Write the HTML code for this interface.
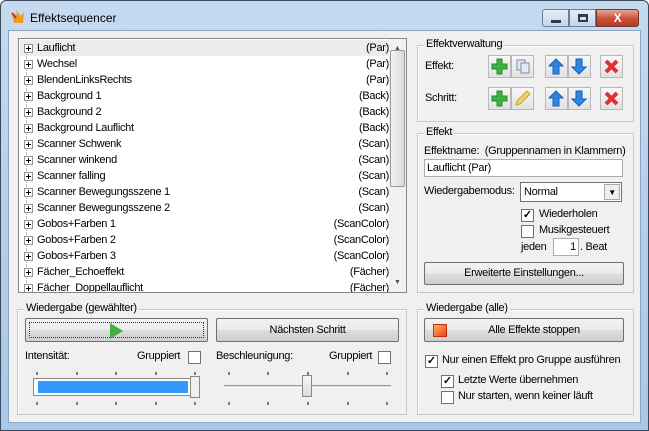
<!DOCTYPE html>
<html><head><meta charset="utf-8"><style>
*{box-sizing:border-box;margin:0;padding:0}
body{width:649px;height:431px;overflow:hidden;background:#fff;font-family:"Liberation Sans",sans-serif;font-size:11px;letter-spacing:-0.3px;color:#000;position:relative}
.a{position:absolute}
.frame{left:0;top:0;width:649px;height:431px;background:linear-gradient(#c5daf0,#b3cde8 60%,#a9c8ea);border:1px solid #3a4a5c;border-radius:6px 6px 0 0}
.client{left:8px;top:30px;width:633px;height:393px;background:#f0f0f0;border:1px solid #8ea5bf}
.grp{position:absolute;border:1px solid #c8c8c8;box-shadow:inset 1px 1px 0 #fff}
.grp>.t{position:absolute;top:-8px;left:6px;background:#f0f0f0;padding:0 2px}
.btn{position:absolute;border:1px solid #707070;border-radius:2px;background:linear-gradient(#f2f2f2,#ebebeb 50%,#dddddd 51%,#cfcfcf);text-align:center}
.ib{position:absolute;width:23px;height:23px;border:1px solid #b8b8b8;background:linear-gradient(#f7f7f7,#e2e2e2)}
.cb{position:absolute;width:13px;height:13px;border:1px solid #707070;background:#fff;font-size:11px;line-height:11px;text-align:center;font-weight:bold;letter-spacing:0}
.row{position:absolute;left:2px;width:368px;height:16px;line-height:16px}
.row .p{position:absolute;left:3px;top:4px;width:9px;height:9px;border:1px solid #909090;background:#fff}
.row .p:before{content:"";position:absolute;left:1px;top:3px;width:5px;height:1px;background:#000}
.row .p:after{content:"";position:absolute;left:3px;top:1px;width:1px;height:5px;background:#000}
.row .n{position:absolute;left:16px}
.row .g{position:absolute;right:0}
</style></head><body>
<div class="a frame"></div>
<svg class="a" style="left:10px;top:9px" width="16" height="16"><path d="M2 4 L7 6 L6 1 L11 7 L14 3 L13 14 L4 14 Z" fill="#f39a1a"/><path d="M2 4 L6 9" stroke="#d03020" stroke-width="2"/></svg>
<div class="a" style="left:30px;top:11px;font-size:12px;letter-spacing:0">Effektsequencer</div>
<div class="a" style="left:542px;top:9px;width:27px;height:18px;border:1px solid #6d7e94;border-radius:3px 0 0 3px;background:linear-gradient(#e6eef8,#c4d4e8)"><div class="a" style="left:8px;top:10px;width:10px;height:3px;background:#2d3b4f"></div></div>
<div class="a" style="left:569px;top:9px;width:27px;height:18px;border:1px solid #6d7e94;background:linear-gradient(#e6eef8,#c4d4e8)"><div class="a" style="left:8px;top:4px;width:10px;height:8px;border:2px solid #2d3b4f;border-top-width:3px"></div></div>
<div class="a" style="left:596px;top:9px;width:43px;height:18px;border:1px solid #6d3b33;border-radius:0 3px 3px 0;background:linear-gradient(#e8a593,#c7503a 55%,#b83a22);color:#fff;font-weight:bold;text-align:center;line-height:16px;font-size:12px">X</div>
<div class="a client"></div>

<div class="a" style="left:18px;top:38px;width:389px;height:255px;border:1px solid #828790;background:#fff;overflow:hidden">
<div class="a" style="left:1px;top:1px;width:369px;height:16px;background:#ececec"></div>
<div class="a" style="left:7px;top:8px;width:1px;height:250px;border-left:1px dotted #a0a0a0"></div>
<div class="row" style="top:1px"><span class="p"></span><span class="n">Lauflicht</span><span class="g">(Par)</span></div>
<div class="row" style="top:17px"><span class="p"></span><span class="n">Wechsel</span><span class="g">(Par)</span></div>
<div class="row" style="top:33px"><span class="p"></span><span class="n">BlendenLinksRechts</span><span class="g">(Par)</span></div>
<div class="row" style="top:49px"><span class="p"></span><span class="n">Background 1</span><span class="g">(Back)</span></div>
<div class="row" style="top:65px"><span class="p"></span><span class="n">Background 2</span><span class="g">(Back)</span></div>
<div class="row" style="top:81px"><span class="p"></span><span class="n">Background Lauflicht</span><span class="g">(Back)</span></div>
<div class="row" style="top:97px"><span class="p"></span><span class="n">Scanner Schwenk</span><span class="g">(Scan)</span></div>
<div class="row" style="top:113px"><span class="p"></span><span class="n">Scanner winkend</span><span class="g">(Scan)</span></div>
<div class="row" style="top:129px"><span class="p"></span><span class="n">Scanner falling</span><span class="g">(Scan)</span></div>
<div class="row" style="top:145px"><span class="p"></span><span class="n">Scanner Bewegungsszene 1</span><span class="g">(Scan)</span></div>
<div class="row" style="top:161px"><span class="p"></span><span class="n">Scanner Bewegungsszene 2</span><span class="g">(Scan)</span></div>
<div class="row" style="top:177px"><span class="p"></span><span class="n">Gobos+Farben 1</span><span class="g">(ScanColor)</span></div>
<div class="row" style="top:193px"><span class="p"></span><span class="n">Gobos+Farben 2</span><span class="g">(ScanColor)</span></div>
<div class="row" style="top:209px"><span class="p"></span><span class="n">Gobos+Farben 3</span><span class="g">(ScanColor)</span></div>
<div class="row" style="top:225px"><span class="p"></span><span class="n">Fächer_Echoeffekt</span><span class="g">(Fächer)</span></div>
<div class="row" style="top:241px"><span class="p"></span><span class="n">Fächer_Doppellauflicht</span><span class="g">(Fächer)</span></div>
<div class="a" style="left:370px;top:0;width:17px;height:253px;background:#f0f0f0"></div>
<div class="a" style="left:375px;top:6px;font-size:7px;color:#555">▲</div>
<div class="a" style="left:375px;top:240px;font-size:7px;color:#555">▼</div>
<div class="a" style="left:371px;top:11px;width:15px;height:137px;border:1px solid #9a9a9a;border-radius:2px;background:linear-gradient(90deg,#f2f2f2,#dadada)"></div>
</div>

<div class="grp" style="left:417px;top:45px;width:217px;height:77px"><span class="t">Effektverwaltung</span></div>
<div class="a" style="left:425px;top:60px">Effekt:</div>
<div class="a" style="left:425px;top:92px">Schritt:</div>
<div class="ib" style="left:488px;top:55px"><svg width="21" height="21"><path d="M8 3h5v5h5v5h-5v5h-5v-5h-5v-5h5z" fill="#3fb23f" stroke="#2a8a2a"/></svg></div>
<div class="ib" style="left:511px;top:55px"><svg width="21" height="21"><rect x="5" y="4" width="8" height="10" fill="#e4eaf4" stroke="#7a8aa8"/><rect x="9" y="7" width="8" height="10" fill="#e4eaf4" stroke="#7a8aa8"/></svg></div>
<div class="ib" style="left:488px;top:87px"><svg width="21" height="21"><path d="M8 3h5v5h5v5h-5v5h-5v-5h-5v-5h5z" fill="#3fb23f" stroke="#2a8a2a"/></svg></div>
<div class="ib" style="left:511px;top:87px"><svg width="21" height="21"><path d="M15 3l3 3-10 10-4 1 1-4z" fill="#f4d46a" stroke="#c8a030"/></svg></div>
<div class="ib" style="left:545px;top:55px"><svg width="21" height="21"><path d="M10 3l7 7h-4v8h-6v-8h-4z" fill="#2a86e0" stroke="#1560b0"/></svg></div>
<div class="ib" style="left:568px;top:55px"><svg width="21" height="21"><path d="M10 18l7-7h-4v-8h-6v8h-4z" fill="#2a86e0" stroke="#1560b0"/></svg></div>
<div class="ib" style="left:545px;top:87px"><svg width="21" height="21"><path d="M10 3l7 7h-4v8h-6v-8h-4z" fill="#2a86e0" stroke="#1560b0"/></svg></div>
<div class="ib" style="left:568px;top:87px"><svg width="21" height="21"><path d="M10 18l7-7h-4v-8h-6v8h-4z" fill="#2a86e0" stroke="#1560b0"/></svg></div>
<div class="ib" style="left:600px;top:55px"><svg width="21" height="21"><path d="M5 5L16 16M16 5L5 16" stroke="#e03030" stroke-width="4"/></svg></div>
<div class="ib" style="left:600px;top:87px"><svg width="21" height="21"><path d="M5 5L16 16M16 5L5 16" stroke="#e03030" stroke-width="4"/></svg></div>

<div class="grp" style="left:417px;top:133px;width:217px;height:160px"><span class="t">Effekt</span></div>
<div class="a" style="left:424px;top:145px">Effektname:&nbsp; (Gruppennamen in Klammern)</div>
<div class="a" style="left:424px;top:159px;width:199px;height:18px;border:1px solid #abadb3;background:#fff;padding:2px 2px">Lauflicht (Par)</div>
<div class="a" style="left:424px;top:185px">Wiedergabemodus:</div>
<div class="a" style="left:520px;top:182px;width:102px;height:20px;border:1px solid #707070;background:#fff;padding:3px 3px">Normal<div class="a" style="right:1px;top:1px;width:16px;height:16px;border:1px solid #aaa;background:#eee;font-size:8px;text-align:center;line-height:15px">▼</div></div>
<div class="cb" style="left:521px;top:209px">✓</div><div class="a" style="left:539px;top:208px">Wiederholen</div>
<div class="cb" style="left:521px;top:225px"></div><div class="a" style="left:539px;top:224px">Musikgesteuert</div>
<div class="a" style="left:521px;top:241px">jeden</div>
<div class="a" style="left:553px;top:238px;width:26px;height:18px;border:1px solid #abadb3;background:#fff;text-align:right;padding:2px 2px">1</div>
<div class="a" style="left:580px;top:241px">. Beat</div>
<div class="btn" style="left:424px;top:262px;width:200px;height:23px;line-height:21px">Erweiterte Einstellungen...</div>

<div class="grp" style="left:17px;top:309px;width:390px;height:106px"><span class="t">Wiedergabe (gewählter)</span></div>
<div class="btn" style="left:25px;top:318px;width:183px;height:24px"><div class="a" style="left:3px;top:3px;right:3px;bottom:3px;border:1px dotted #333"></div><svg class="a" style="left:82px;top:3px" width="16" height="18"><path d="M2 1L15 9L2 17Z" fill="#44b044"/></svg></div>
<div class="btn" style="left:216px;top:318px;width:183px;height:24px;line-height:22px">Nächsten Schritt</div>
<div class="a" style="left:25px;top:350px">Intensität:</div>
<div class="a" style="left:137px;top:350px">Gruppiert</div><div class="cb" style="left:188px;top:351px"></div>
<div class="a" style="left:216px;top:350px">Beschleunigung:</div>
<div class="a" style="left:329px;top:350px">Gruppiert</div><div class="cb" style="left:378px;top:351px"></div>
<div class="a" style="left:33px;top:378px;width:167px;height:18px;border:1px solid #888;background:#fff"><div class="a" style="left:4px;top:2px;width:150px;height:12px;background:#3399ff"></div><div class="a" style="right:-1px;top:-3px;width:10px;height:22px;border:1px solid #888;background:#f0f0f0"></div></div>
<div class="a" style="left:224px;top:385px;width:167px;height:3px;border-top:1px solid #999;border-bottom:1px solid #fff;background:#ddd"></div>
<div class="a" style="left:302px;top:375px;width:10px;height:22px;border:1px solid #888;background:linear-gradient(#f6f6f6,#dcdcdc)"></div>
<svg class="a" style="left:30px;top:370px" width="380" height="38">
<g stroke="#000"><path d="M7 2v3M47 2v3M86 2v3M126 2v3M165 2v3M7 32v3M47 32v3M86 32v3M126 32v3M165 32v3M199 2v3M238 2v3M278 2v3M318 2v3M357 2v3M199 32v3M238 32v3M278 32v3M318 32v3M357 32v3"/></g></svg>

<div class="grp" style="left:417px;top:309px;width:217px;height:106px"><span class="t">Wiedergabe (alle)</span></div>
<div class="btn" style="left:424px;top:318px;width:200px;height:24px;line-height:22px"><div class="a" style="left:8px;top:5px;width:14px;height:13px;background:linear-gradient(135deg,#ffb060,#f04020);border:1px solid #c03010"></div><span style="padding-left:20px">Alle Effekte stoppen</span></div>
<div class="cb" style="left:425px;top:355px">✓</div><div class="a" style="left:442px;top:354px">Nur einen Effekt pro Gruppe ausführen</div>
<div class="cb" style="left:441px;top:375px">✓</div><div class="a" style="left:458px;top:374px">Letzte Werte übernehmen</div>
<div class="cb" style="left:441px;top:391px"></div><div class="a" style="left:458px;top:390px">Nur starten, wenn keiner läuft</div>
</body></html>
